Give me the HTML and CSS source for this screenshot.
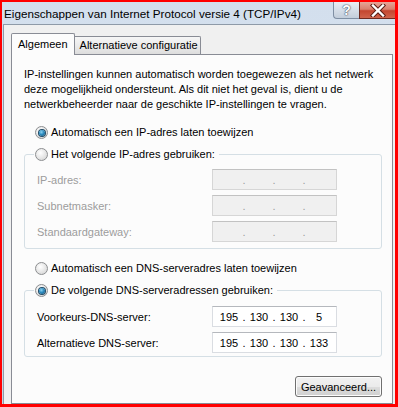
FILE: index.html
```html
<!DOCTYPE html>
<html lang="nl">
<head>
    <meta charset="UTF-8">
    <meta name="viewport" content="width=device-width, initial-scale=1.0">
    <title>Eigenschappen van Internet Protocol versie 4 (TCP/IPv4)</title>
    <link rel="stylesheet" href="styles.css">
</head>
<body>
    <div class="shot">
        <div class="window">
            <div class="titlebar">
                <span class="title">Eigenschappen van Internet Protocol versie 4 (TCP/IPv4)</span>
                <div class="caption-buttons">
                    <button class="cap help">?</button>
                    <button class="cap close">
                        <svg width="16" height="13" viewBox="0 0 16 13">
                            <path d="M3 1.5 L13 11.5 M13 1.5 L3 11.5" stroke="#5a1d14" stroke-width="4.4" stroke-linecap="square" fill="none"/>
                            <path d="M3 1.5 L13 11.5 M13 1.5 L3 11.5" stroke="#ffffff" stroke-width="2.4" stroke-linecap="square" fill="none"/>
                        </svg>
                    </button>
                </div>
            </div>

            <div class="client">
                <div class="tabs">
                    <div class="tab active">Algemeen</div>
                    <div class="tab">Alternatieve configuratie</div>
                </div>

                <div class="panel">
                    <p class="intro">IP-instellingen kunnen automatisch worden toegewezen als het netwerk deze mogelijkheid ondersteunt. Als dit niet het geval is, dient u de netwerkbeheerder naar de geschikte IP-instellingen te vragen.</p>

                    <div class="option indent"><span class="radio checked"></span>Automatisch een IP-adres laten toewijzen</div>

                    <fieldset class="group">
                        <legend><span class="option"><span class="radio"></span>Het volgende IP-adres gebruiken:</span></legend>
                        <div class="field disabled">
                            <span class="field-label">IP-adres:</span>
                            <span class="ip"><span class="seg"></span><span class="dot">.</span><span class="seg"></span><span class="dot">.</span><span class="seg"></span><span class="dot">.</span><span class="seg"></span></span>
                        </div>
                        <div class="field disabled">
                            <span class="field-label">Subnetmasker:</span>
                            <span class="ip"><span class="seg"></span><span class="dot">.</span><span class="seg"></span><span class="dot">.</span><span class="seg"></span><span class="dot">.</span><span class="seg"></span></span>
                        </div>
                        <div class="field disabled">
                            <span class="field-label">Standaardgateway:</span>
                            <span class="ip"><span class="seg"></span><span class="dot">.</span><span class="seg"></span><span class="dot">.</span><span class="seg"></span><span class="dot">.</span><span class="seg"></span></span>
                        </div>
                    </fieldset>

                    <div class="option indent dns-auto"><span class="radio"></span>Automatisch een DNS-serveradres laten toewijzen</div>

                    <fieldset class="group dns">
                        <legend><span class="option"><span class="radio checked"></span>De volgende DNS-serveradressen gebruiken:</span></legend>
                        <div class="field">
                            <span class="field-label">Voorkeurs-DNS-server:</span>
                            <span class="ip"><span class="seg">195</span><span class="dot">.</span><span class="seg">130</span><span class="dot">.</span><span class="seg">130</span><span class="dot">.</span><span class="seg">5</span></span>
                        </div>
                        <div class="field">
                            <span class="field-label">Alternatieve DNS-server:</span>
                            <span class="ip"><span class="seg">195</span><span class="dot">.</span><span class="seg">130</span><span class="dot">.</span><span class="seg">130</span><span class="dot">.</span><span class="seg">133</span></span>
                        </div>
                    </fieldset>

                    <div class="actions">
                        <button class="btn">Geavanceerd...</button>
                    </div>
                </div>
            </div>
        </div>
    </div>
</body>
</html>
```

FILE: styles.css
```css
body {
    margin: 0;
    font-family: "Liberation Sans", Arial, sans-serif;
    font-size: 11px;
    color: #000;
}

.shot {
    width: 398px;
    height: 407px;
    box-sizing: border-box;
    border: solid #f00;
    border-width: 2px 3px 3px 2px;
    overflow: hidden;
    background: linear-gradient(180deg, #d3dfed 0%, #dbe5f1 70%, #c9d4e0 100%);
}

.window {
    height: 100%;
    display: flex;
    flex-direction: column;
}

/* titelbalk */
.titlebar {
    height: 22px;
    display: flex;
    align-items: flex-start;
    padding-left: 2px;
    flex-shrink: 0;
}

.title {
    font-size: 11.7px;
    line-height: 15px;
    padding-top: 4px;
    color: #000;
    white-space: nowrap;
}

.caption-buttons {
    margin-left: auto;
    display: flex;
}

.cap {
    height: 17px;
    margin: 0;
    padding: 0;
    border: 1px solid #7f8fa3;
    border-top: none;
    display: flex;
    align-items: center;
    justify-content: center;
}

.help {
    width: 26px;
    border-radius: 0 0 0 4px;
    border-right: none;
    background: linear-gradient(180deg, #e9eef4 0%, #d6dee8 50%, #c3cedb 100%);
    font-family: "Liberation Sans", Arial, sans-serif;
    font-size: 14px;
    font-weight: bold;
    color: #fff;
    text-shadow: 0 0 1px #4d5866, 0 0 1px #4d5866, 0 0 2px #6b7786;
}

.close {
    width: 36px;
    border-color: #6f2a20;
    border-right: none;
    background: linear-gradient(180deg, #e6a497 0%, #d8806f 45%, #c4462f 55%, #d0644c 100%);
}

/* venster-inhoud */
.client {
    flex: 1;
    margin-left: 1px;
    border-left: 1px solid #8e9aa8;
    border-top: 1px solid #8e9aa8;
    background: #f0f0f0;
    padding: 0 2px 0 7px;
    display: flex;
    flex-direction: column;
}

.tabs {
    display: flex;
    align-items: flex-end;
    margin-top: 8px;
    margin-bottom: -1px;
}

.tab {
    line-height: 15px;
    white-space: nowrap;
    border: 1px solid #898c95;
    border-bottom: none;
}

.tab.active {
    position: relative;
    z-index: 1;
    padding: 3px 6px 3px 6px;
    background: #fcfcfc;
    border-radius: 2px 2px 0 0;
}

.tab:not(.active) {
    padding: 1px 2px 1px 5px;
    margin-bottom: 1px;
    border-left: none;
    background: linear-gradient(180deg, #f6f6f6 0%, #ebebeb 50%, #dddddd 100%);
    border-radius: 0 2px 0 0;
}

.panel {
    flex: 1;
    background: #fcfcfc;
    border: 1px solid #898c95;
    padding: 12px 10px 0 12px;
}

.intro {
    margin: 0;
    line-height: 15px;
}

.option {
    display: flex;
    align-items: center;
    gap: 3px;
    line-height: 15px;
    white-space: nowrap;
}

.option.indent {
    margin: 13px 0 0 11px;
}

.option.dns-auto {
    margin-top: 12px;
}

.radio {
    width: 11px;
    height: 11px;
    border-radius: 50%;
    border: 1px solid #8c8e90;
    background: radial-gradient(circle at 40% 35%, #ffffff 0%, #eaeaea 45%, #cfcfcf 100%);
    display: inline-flex;
    align-items: center;
    justify-content: center;
    flex-shrink: 0;
}

.radio.checked::after {
    content: "";
    width: 6px;
    height: 6px;
    border-radius: 50%;
    background: radial-gradient(circle at 40% 35%, #8fd4f2 0%, #2d8cc0 45%, #0d4c72 100%);
    box-shadow: 0 0 0 1px #1e4a66;
}

.group {
    margin: 7px 0 0 0;
    padding: 7px 10px 6px 12px;
    border: 1px solid #d5dfe5;
    border-radius: 3px;
    min-width: 0;
}

.group.dns {
    padding-top: 8px;
    padding-bottom: 3px;
}

.group legend {
    padding: 0 4px 0 1px;
    margin-left: -3px;
    line-height: 15px;
}

.field {
    display: flex;
    align-items: center;
    height: 21px;
}

.field + .field {
    margin-top: 5px;
}

.field-label {
    width: 175px;
    flex-shrink: 0;
}

.field.disabled .field-label {
    color: #9d9d9d;
}

.ip {
    width: 125px;
    height: 21px;
    box-sizing: border-box;
    display: flex;
    align-items: center;
    padding-left: 5px;
    background: #fff;
    border: 1px solid #dadde2;
    border-top-color: #b5b8bd;
}

.field.disabled .ip {
    background: #f0f0f0;
    border-color: #d6d6d6;
    border-top-color: #c2c2c2;
    color: #9d9d9d;
}

.seg {
    width: 22px;
    text-align: center;
}

.dot {
    width: 8px;
    text-align: center;
}

.actions {
    display: flex;
    justify-content: flex-end;
    margin-top: 19px;
}

.btn {
    width: 87px;
    height: 21px;
    margin: 0;
    padding: 0;
    font-family: "Liberation Sans", Arial, sans-serif;
    font-size: 11px;
    color: #000;
    border: 1px solid #707070;
    border-radius: 3px;
    background: linear-gradient(180deg, #f2f2f2 0%, #ebebeb 50%, #dddddd 51%, #cfcfcf 100%);
    box-shadow: inset 0 0 0 1px #fcfcfc;
}
```
